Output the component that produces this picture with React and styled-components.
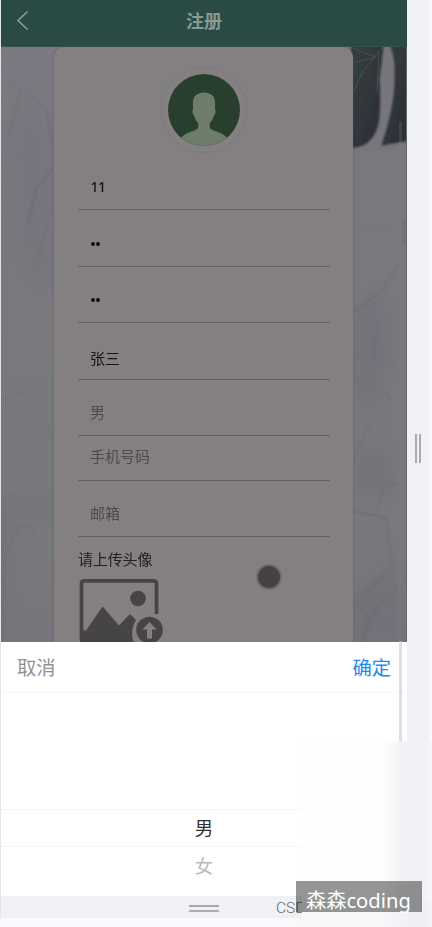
import React from "react";
import styled, { createGlobalStyle } from "styled-components";

const Global = createGlobalStyle`
  * { box-sizing: border-box; }
  body { margin: 0; background: #f8f9fb; font-family: "Noto Sans CJK SC", sans-serif; }
`;

const Stage = styled.main`
  position: relative;
  width: 432px;
  height: 927px;
  overflow: hidden;
  background: #f8f9fb;
`;
const Workbench = styled.div`
  display: grid;
  grid-template-columns: 406px 22px;
  grid-template-rows: 896px 22px;
  padding-left: 1px;
  background: linear-gradient(90deg, #e4e5e8 1px, transparent 1px);
`;
const Phone = styled.section`
  display: flex;
  flex-direction: column;
  overflow: hidden;
  background: #fff;
`;
const Header = styled.header`
  display: grid;
  grid-template-columns: 44px 1fr 44px;
  align-items: center;
  height: 47px;
  padding-bottom: 6px;
  background: #294b43;
  border-bottom: 1px solid #3a4f4a;
`;
const BackIcon = styled.svg`
  width: 13px;
  height: 21px;
  margin-left: 15px;
  fill: none;
  stroke: #979b98;
  stroke-width: 1.5;
`;
const Title = styled.h1`
  margin: 0;
  font-size: 18px;
  line-height: 26px;
  font-weight: 700;
  color: #899b96;
  text-align: center;
`;
const Page = styled.div`
  position: relative;
  height: 595px;
  overflow: hidden;
  background: #7a7880;
`;
const Marble = styled.svg`
  position: absolute;
  inset: 0;
  width: 406px;
  height: 595px;
`;
const Card = styled.form`
  position: relative;
  width: 299px;
  height: 640px;
  margin-left: 53px;
  padding: 20px 23.5px 0 24px;
  border-radius: 11px 11px 0 0;
  background: #847f80;
  box-shadow: 0 0 3px rgba(75, 77, 80, 0.45);
`;
const AvatarRing = styled.div`
  display: flex;
  align-items: center;
  justify-content: center;
  width: 86px;
  height: 86px;
  margin: 0 auto 1px;
  border: 1px solid #7b7a7c;
  border-radius: 50%;
  background: #858183;
`;
const Field = styled.div`
  display: flex;
  align-items: flex-end;
  height: ${(p) => p.$h}px;
  padding: 0 0 ${(p) => p.$drop ?? 11}px 12px;
  border-bottom: 1px solid #636162;
  font-size: 15px;
  line-height: 22px;
  color: ${(p) => (p.$muted ? "#4e4b4d" : "#161516")};
`;
const Numeric = styled.span`
  font-family: "Noto Sans", sans-serif;
  font-size: 14px;
  font-weight: 500;
  letter-spacing: -0.6px;
  padding-left: 0.5px;
`;
const Password = styled.span`
  display: flex;
  align-items: center;
  gap: 1.6px;
  height: 22px;
  padding-left: 0.5px;
  &::before, &::after {
    content: "";
    width: 4px;
    height: 4px;
    border-radius: 50%;
    background: #100f10;
  }
`;
const UploadLabel = styled.div`
  height: 41px;
  padding-top: 11px;
  font-size: 15px;
  line-height: 22px;
  letter-spacing: -0.15px;
  color: #202020;
`;
const UploadIcon = styled.svg`
  display: block;
  width: 88px;
  height: 78px;
`;
const TouchPoint = styled.i`
  position: absolute;
  left: 255px;
  top: 517px;
  width: 26px;
  height: 26px;
  border: 2.5px solid #706c6d;
  border-radius: 50%;
  background: #444243;
`;
const ScrollThumb = styled.i`
  position: absolute;
  z-index: 2;
  left: 399px;
  top: 122px;
  width: 3px;
  height: 619px;
  background: linear-gradient(rgba(132, 130, 133, 0.22) 519px, #dedee0 520px);
`;
const Picker = styled.section`
  display: grid;
  grid-template-rows: 51px 116px 38px 49px;
  height: 254px;
  background: #fff;
`;
const PickerBar = styled.div`
  display: flex;
  justify-content: space-between;
  align-items: center;
  padding: 0 16px 1px;
  border-bottom: 1px solid #f5f5f5;
`;
const Action = styled.button`
  padding: 0;
  border: 0;
  background: none;
  font-family: inherit;
  font-size: 19.3px;
  line-height: 28px;
  color: ${(p) => (p.$primary ? "#2388ef" : "#929292")};
`;
const Option = styled.div`
  display: flex;
  justify-content: center;
  padding-top: ${(p) => (p.$active ? 3 : 4)}px;
  border: solid #f4f4f4;
  border-width: ${(p) => (p.$active ? "1px 0" : "0")};
  font-size: 18.5px;
  line-height: 28px;
  color: ${(p) => (p.$active ? "#303030" : "#bababa")};
`;
const Handle = styled.div`
  display: flex;
  flex-direction: ${(p) => (p.$across ? "column" : "row")};
  align-items: center;
  justify-content: center;
  gap: 2.5px;
  padding-top: ${(p) => (p.$across ? 3 : 0)}px;
  background: #f0f1f5;
  i {
    width: ${(p) => (p.$across ? 30 : 2)}px;
    height: ${(p) => (p.$across ? 2 : 29)}px;
    background: #acacae;
  }
`;
const Corner = styled.div`
  background: #f0f1f5;
`;
const Credit = styled.span`
  position: absolute;
  left: 276px;
  top: 898px;
  font-family: Roboto, sans-serif;
  font-size: 15.5px;
  font-weight: 300;
  line-height: 21px;
  color: #66676a;
`;
const Frost = styled.div`
  position: absolute;
  left: 302px;
  top: 741px;
  width: 130px;
  height: 186px;
  background: linear-gradient(90deg, #fefefe 78px, #f2f3f5 100px, #f0f1f5 118px, #f5f6f8);
  &::after {
    content: "";
    display: block;
    height: 27px;
    margin-top: 159px;
    background: linear-gradient(90deg, #f7f8fa 60%, #eeeff2 90%, #f3f4f6);
  }
`;
const Watermark = styled.div`
  position: absolute;
  left: 296px;
  top: 881px;
  width: 126px;
  height: 31px;
  padding-left: 10px;
  background: rgba(0, 0, 0, 0.41);
  font-family: "Noto Sans", "Noto Sans CJK SC", sans-serif;
  font-size: 20.2px;
  line-height: 38px;
  white-space: nowrap;
  color: #fff;
`;

function Backdrop() {
  return (
    <Marble viewBox="0 0 406 595" fill="none">
      <defs>
        <linearGradient id="stone" x2="0" y2="1">
          <stop stopColor="#7b7880" />
          <stop offset=".3" stopColor="#79787f" />
          <stop offset=".55" stopColor="#78797d" />
          <stop offset=".8" stopColor="#78797d" />
          <stop offset="1" stopColor="#77757b" />
        </linearGradient>
        <linearGradient id="leaf" x2="1" y2="1">
          <stop stopColor="#363f3e" />
          <stop offset=".6" stopColor="#2f343a" />
          <stop offset="1" stopColor="#292e33" />
        </linearGradient>
        <filter id="soft"><feGaussianBlur stdDeviation=".8" /></filter>
        <filter id="haze"><feGaussianBlur stdDeviation="7" /></filter>
      </defs>
      <path fill="url(#stone)" d="M0 0h406v595H0z" />
      <g filter="url(#haze)" fill="#6d6e77" opacity=".45">
        <path d="M350 265l30-22 10 60-20 60-20-20zM352 410l30-12 12 42-40 10zM350 548l45-35 8 82h-53z" />
        <path opacity=".5" d="M10 90l20-30 20 45-4 140-20-30zM0 455l50-8v25l-35 12L4 595H0z" />
      </g>
      <g filter="url(#soft)" stroke="#64636a">
        <path opacity=".4" d="M10 35l20 14 19 18M20 42L7 90M51 158l-15 60M1 352l22-6M3 445l12 6M5 510c7-30 20-40 28-24M2 455v140" />
        <path opacity=".9" d="M47 70l4 27M52 121L35 142M35 142l-8 34M46 382l6 9" />
        <path opacity=".9" d="M352 265l30-22M384 345l5 6M351 464l34 7M362 590l12-26 6-8M403 172v25" />
        <path opacity=".5" d="M382 243l17-27M376 280l-4 33M385 471l6 48-30 32M374 468l8-28 18-4M352 412l16-34M380 556l19-17M353 556l14 11-4 28" />
      </g>
      <g filter="url(#soft)">
        <path fill="#77767d" d="M352 0h54v98l-26 6h-28z" />
        <path fill="url(#leaf)" d="M350-2h33l-4 34c1 30 1 44-5 55-5 9-13 14-24 14z" />
        <path fill="url(#leaf)" d="M388-2h20v96l-28 5c9-27 15-50 13-83-1-8-2-13-5-18z" />
      </g>
      <g stroke="#43604a" strokeWidth="1">
        <path opacity=".75" d="M382 0l-10 11-20 5M374 10l-12 14-10 22M378 5l-2 40M352 1l22 9" />
      </g>
      <path stroke="#68666b" d="M405.500 0v595" />
    </Marble>
  );
}

function Avatar() {
  return (
    <svg width="72" height="72" viewBox="0 0 72 72">
      <defs><clipPath id="portrait"><circle cx="36" cy="36" r="36" /></clipPath></defs>
      <g clipPath="url(#portrait)">
        <path fill="#293f2d" d="M0 0h72v72H0z" />
        <path fill="#6d7d69" d="M36 18.500c-7 0-11.500 4-11 11v6c-1.200.8-.3 5.500 1.200 6 .8 3.500 2 5.500 4 7.500v4.500c-2 4.500-11.700 3.500-17.200 10.500V74h46V64c-5-7-15.200-6-17.200-10.500V49c2-2 3.200-4 4-7.500 1.500-.5 2.400-5.200 1.200-6v-6c.5-7-4-11-11-11z" />
      </g>
    </svg>
  );
}

function UploadPicture() {
  return (
    <UploadIcon viewBox="0 0 88 78">
      <path fill="none" stroke="#464446" strokeWidth="3.700" d="M3.500 62V5.500Q3.500 2.800 6.500 2.800h69q3 0 3 2.700V36" />
      <path fill="#464446" d="M2 52.500H8L24.500 28.500l16.500 19L52 36l6 6c-6 10-5 20 2 30H4q-2-2-2-6z" />
      <circle cx="60" cy="20.500" r="7.800" fill="#464446" />
      <circle cx="71.500" cy="52" r="16" fill="#847f80" />
      <circle cx="71.500" cy="52" r="13.300" fill="#464446" />
      <path fill="#847f80" d="M71.500 44l7 7.500H74v9h-5v-9h-4.500z" />
    </UploadIcon>
  );
}

export default function App() {
  return (
    <Stage>
      <Global />
      <Workbench>
        <Phone>
          <Header>
            <BackIcon viewBox="0 0 13 21"><path d="M11.500 1.500L2 10.500l9.500 9" /></BackIcon>
            <Title>注册</Title>
          </Header>
          <Page>
            <Backdrop />
            <Card>
              <AvatarRing><Avatar /></AvatarRing>
              <Field $h={56}><Numeric>11</Numeric></Field>
              <Field $h={57}><Password /></Field>
              <Field $h={56}><Password /></Field>
              <Field $h={57} $drop={10}>张三</Field>
              <Field $h={56} $drop={12} $muted>男</Field>
              <Field $h={45} $drop={13} $muted>手机号码</Field>
              <Field $h={56} $drop={12} $muted>邮箱</Field>
              <UploadLabel>请上传头像</UploadLabel>
              <UploadPicture />
            </Card>
            <TouchPoint />
          </Page>
          <Picker>
            <PickerBar>
              <Action>取消</Action>
              <Action $primary>确定</Action>
            </PickerBar>
            <div />
            <Option $active>男</Option>
            <Option>女</Option>
          </Picker>
        </Phone>
        <Handle><i /><i /></Handle>
        <Handle $across><i /><i /></Handle>
        <Corner />
      </Workbench>
      <ScrollThumb />
      <Credit>CSDN</Credit>
      <Frost />
      <Watermark>森森coding</Watermark>
    </Stage>
  );
}
